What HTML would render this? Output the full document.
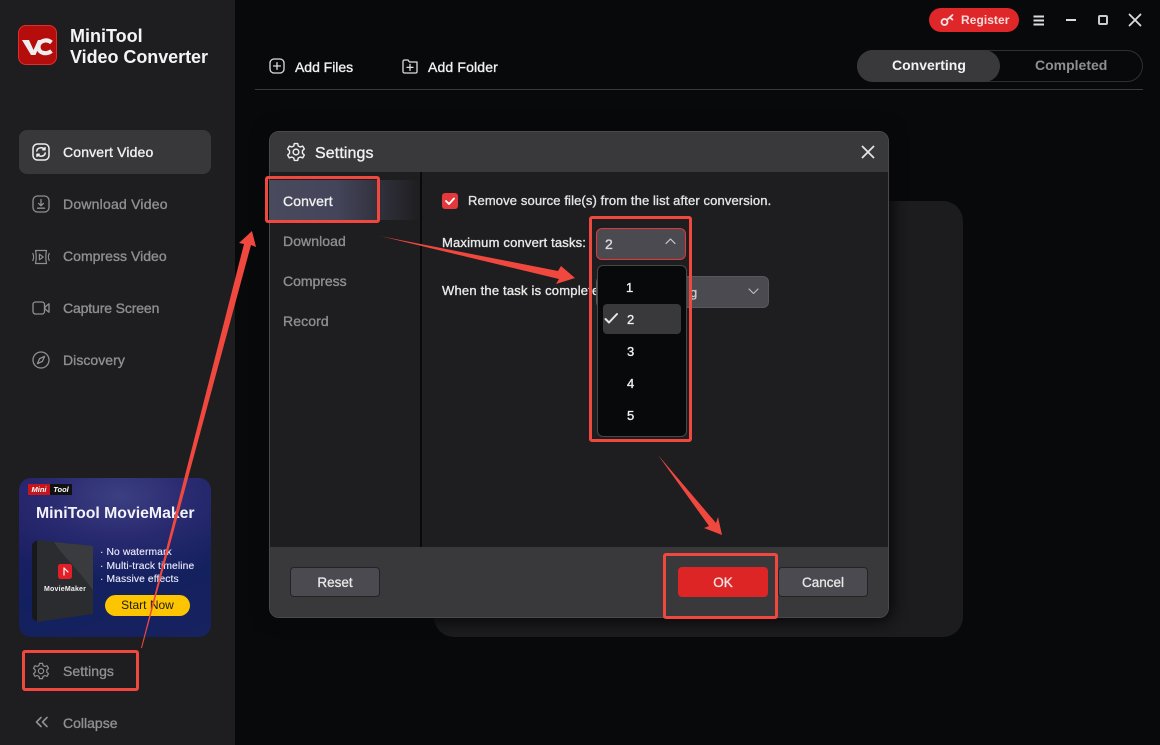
<!DOCTYPE html>
<html lang="en">
<head>
<meta charset="utf-8">
<title>MiniTool Video Converter Settings</title>
<style>
html,body{margin:0;padding:0;background:#08090b}
#a{position:relative;width:1160px;height:745px;overflow:hidden;background:#08090b;font-family:"Liberation Sans",sans-serif;color:#fff}
#a div,#a svg{position:absolute;box-sizing:border-box}
.t{white-space:nowrap;line-height:20px;height:20px;font-size:14px;letter-spacing:.1px;-webkit-text-stroke:.35px currentColor}
.g{color:#8f8f91}
.w{color:#f0f0f0}
.box{border:3px solid #f0483e;border-radius:3px}
.btn{background:#4a4a50;border:1px solid #232326;border-radius:4px;text-align:center;line-height:30px;font-size:13.5px;color:#e8e8e8;-webkit-text-stroke:.3px currentColor}
svg{fill:none;stroke-linecap:round;stroke-linejoin:round}
</style>
</head>
<body>
<div id="a">
  <!-- sidebar -->
  <div style="left:0;top:0;width:235px;height:745px;background:#1e1e20"></div>

  <div style="left:18px;top:25px;width:39px;height:40px;background:#b50c0c;border:1px solid #e22d2d;border-radius:8px"></div>
  <svg style="left:18px;top:25px" width="39" height="40" viewBox="0 0 39 40">
    <path d="M4 15H11L15.5 25L20 15H24L17.5 30H13Z" fill="#eee" stroke="none"/>
    <path d="M33.5 17.5C28 13 20 16.5 20.5 22.5C21 29 29 29.5 33.5 26" stroke="#eee" stroke-width="4.2" stroke-linecap="butt"/>
  </svg>
  <div class="t" style="left:70px;top:26px;font-size:18px;font-weight:bold;color:#f4f4f4;-webkit-text-stroke:0;letter-spacing:0">MiniTool</div>
  <div class="t" style="left:70px;top:47px;font-size:18px;font-weight:bold;color:#f4f4f4;-webkit-text-stroke:0;letter-spacing:-.05px">Video Converter</div>

  <div style="left:19px;top:130px;width:192px;height:44px;background:#38383b;border-radius:8px"></div>
  <svg style="left:32px;top:143px" width="18" height="18" viewBox="0 0 18 18" stroke="#eee" stroke-width="1.5">
    <rect x="1" y="1" width="16" height="16" rx="4.5"/>
    <path d="M4.8 8C5.2 4.4 10.6 3.8 12.6 6.4M13.2 10C12.8 13.6 7.4 14.2 5.4 11.6"/>
    <path d="M13 4.6V6.8H10.8M5 13.4V11.2H7.2"/>
  </svg>
  <div class="t w" style="left:63px;top:142px;letter-spacing:.15px">Convert Video</div>

  <svg style="left:32px;top:195px" width="18" height="18" viewBox="0 0 18 18" stroke="#8f8f91" stroke-width="1.3">
    <rect x="1" y="1" width="16" height="16" rx="4.5"/>
    <path d="M9 4.5V10.5M6.6 8.4L9 10.8L11.4 8.4M5.5 13.2H12.5"/>
  </svg>
  <div class="t g" style="left:63px;top:194px;letter-spacing:.22px">Download Video</div>

  <svg style="left:32px;top:248px" width="18" height="18" viewBox="0 0 18 18" stroke="#8f8f91" stroke-width="1.2">
    <path d="M3.5 2.5H14.5C13.6 6 13.6 12 14.5 15.5H3.5C4.4 12 4.4 6 3.5 2.5Z"/>
    <path d="M7.4 6.2V11.8L11.2 9Z"/>
    <path d="M.8 5.5C1.8 7.5 1.8 10.5 .8 12.5M17.2 5.5C16.2 7.5 16.2 10.5 17.2 12.5"/>
  </svg>
  <div class="t g" style="left:63px;top:246px;letter-spacing:.03px">Compress Video</div>

  <svg style="left:32px;top:300px" width="18" height="16" viewBox="0 0 18 16" stroke="#8f8f91" stroke-width="1.3">
    <rect x="1" y="2" width="11.5" height="12" rx="2.5"/>
    <path d="M13 7L17 3.8V12.2L13 9Z"/>
  </svg>
  <div class="t g" style="left:63px;top:298px;letter-spacing:-.13px">Capture Screen</div>

  <svg style="left:32px;top:351px" width="18" height="18" viewBox="0 0 18 18" stroke="#8f8f91" stroke-width="1.3">
    <circle cx="9" cy="9" r="8"/>
    <path d="M12.6 5.4L10.4 10.4L5.4 12.6L7.6 7.6Z"/>
  </svg>
  <div class="t g" style="left:63px;top:350px;letter-spacing:.05px">Discovery</div>

  <!-- banner -->
  <div style="left:19px;top:478px;width:192px;height:159px;border-radius:12px;overflow:hidden;background:radial-gradient(ellipse 150px 85px at 100px 18px,#3d3f83 0%,#2a2b70 45%,rgba(30,30,90,0) 100%),linear-gradient(160deg,#241c6b 0%,#13205f 55%,#17235f 100%)">
    <div style="left:9px;top:6px;width:22px;height:11px;background:#c4161c;font:italic bold 7.5px/11px 'Liberation Sans',sans-serif;text-align:center;color:#fff">Mini</div>
    <div style="left:31px;top:6px;width:22px;height:11px;background:#111;font:italic bold 7.5px/11px 'Liberation Sans',sans-serif;text-align:center;color:#fff">Tool</div>
    <div class="t" style="left:17px;top:26px;font-size:15.8px;font-weight:bold;color:#f2f2fa;-webkit-text-stroke:0;letter-spacing:0">MiniTool MovieMaker</div>
    <svg style="left:13px;top:62px" width="62" height="83" viewBox="0 0 62 83">
      <path d="M0 4L5 0V82L0 78Z" fill="#17181c"/>
      <path d="M5 0L61 6V74L5 82Z" fill="#2b2c30"/>
      <path d="M61 6V50C45 28 30 15 22 2Z" fill="#3a3b3f"/>
      <rect x="26" y="24" width="14" height="15" rx="2.5" fill="#e21f26"/>
      <path d="M32 28V35M32 28L36 32" stroke="#fff" stroke-width="1.2"/>
    </svg>
    <div class="t" style="left:25px;top:107px;font-size:7px;line-height:10px;height:10px;font-weight:bold;color:#f0f0f0;-webkit-text-stroke:0;letter-spacing:.2px">MovieMaker</div>
    <div class="t" style="left:81px;top:65px;font-size:10.3px;color:#eef;-webkit-text-stroke:.1px #eef">· No watermark</div>
    <div class="t" style="left:81px;top:79px;font-size:10.3px;color:#eef;-webkit-text-stroke:.1px #eef">· Multi-track timeline</div>
    <div class="t" style="left:81px;top:92px;font-size:10.3px;color:#eef;-webkit-text-stroke:.1px #eef">· Massive effects</div>
    <div style="left:86px;top:117px;width:85px;height:21px;background:#fdc500;border-radius:11px;color:#1b1b1b;font-size:12px;line-height:21px;text-align:center">Start Now</div>
  </div>

  <svg style="left:32px;top:662px" width="18" height="18" viewBox="0 0 18 18" stroke="#8f8f91" stroke-width="1.2">
    <circle cx="9" cy="9" r="2.6"/>
    <path d="M7.5 1.4H10.5L11 3.6L12.9 4.5L15 3.7L16.5 6.3L14.8 7.8V10.2L16.5 11.7L15 14.3L12.9 13.5L11 14.4L10.5 16.6H7.5L7 14.4L5.1 13.5L3 14.3L1.5 11.7L3.2 10.2V7.8L1.5 6.3L3 3.7L5.1 4.5L7 3.6Z"/>
  </svg>
  <div class="t g" style="left:63px;top:661px;letter-spacing:.05px">Settings</div>
  <svg style="left:35px;top:716px" width="14" height="12" viewBox="0 0 14 12" stroke="#8f8f91" stroke-width="1.6">
    <path d="M6 1.5L1.5 6L6 10.5M12 1.5L7.5 6L12 10.5"/>
  </svg>
  <div class="t g" style="left:63px;top:713px;letter-spacing:0">Collapse</div>

  <!-- top bar -->
  <div style="left:929px;top:8px;width:90px;height:24px;background:#df2628;border-radius:12px"></div>
  <svg style="left:940px;top:13px" width="15" height="14" viewBox="0 0 15 14" stroke="#f5e6e6" stroke-width="1.8">
    <circle cx="4.5" cy="9" r="3"/>
    <path d="M7 6.8L12.5 2M10 4.6L12.4 6.6"/>
  </svg>
  <div class="t" style="left:961px;top:10px;font-size:12px;font-weight:bold;color:#f6dcdc;-webkit-text-stroke:0;letter-spacing:.05px">Register</div>
  <svg style="left:1032px;top:14px" width="14" height="13" viewBox="0 0 14 13" stroke="#ddd" stroke-width="2">
    <path d="M1.5 2.5H12M1.5 6.5H12M1.5 10.5H12" stroke-linecap="butt"/>
  </svg>
  <div style="left:1066px;top:19px;width:10px;height:2px;background:#ddd"></div>
  <div style="left:1098px;top:15px;width:10px;height:10px;border:2px solid #ccc;border-radius:2px"></div>
  <svg style="left:1128px;top:13px" width="14" height="14" viewBox="0 0 14 14" stroke="#ddd" stroke-width="1.8">
    <path d="M1.5 1.5L12.5 12.5M12.5 1.5L1.5 12.5"/>
  </svg>

  <svg style="left:269px;top:58px" width="16" height="16" viewBox="0 0 16 16" stroke="#ddd" stroke-width="1.3">
    <rect x="1" y="1" width="14" height="14" rx="4"/>
    <path d="M8 4.6V11.4M4.6 8H11.4"/>
  </svg>
  <div class="t w" style="left:295px;top:57px;letter-spacing:-.03px">Add Files</div>
  <svg style="left:402px;top:59px" width="16" height="15" viewBox="0 0 16 15" stroke="#ddd" stroke-width="1.3">
    <path d="M1 2.5C1 1.6 1.6 1 2.5 1H6L7.5 3H15V12.5C15 13.4 14.4 14 13.5 14H2.5C1.6 14 1 13.4 1 12.5Z"/>
    <path d="M8 5.4V11.4M5 8.4H11"/>
  </svg>
  <div class="t w" style="left:428px;top:57px;letter-spacing:.15px">Add Folder</div>

  <div style="left:857px;top:50px;width:286px;height:32px;border:1px solid #303033;border-radius:16px"></div>
  <div style="left:857px;top:50px;width:143px;height:32px;background:#39393c;border-radius:16px"></div>
  <div class="t" style="left:892px;top:55px;font-weight:bold;color:#f2f2f2;-webkit-text-stroke:0;letter-spacing:0">Converting</div>
  <div class="t" style="left:1035px;top:55px;font-weight:bold;color:#8f8f91;-webkit-text-stroke:0;letter-spacing:0">Completed</div>
  <div style="left:255px;top:89px;width:888px;height:1px;background:#3a3a3d"></div>

  <!-- back panel -->
  <div style="left:434px;top:201px;width:529px;height:436px;background:#1c1c1e;border-radius:20px"></div>

  <!-- dialog -->
  <div style="left:269px;top:131px;width:620px;height:487px;background:#1e1e20;border:1px solid #4a4a4d;border-radius:10px;overflow:hidden;box-shadow:0 0 14px 4px #08090b">
    <div style="left:0;top:0;width:618px;height:40px;background:#39393b"></div>
    <div style="left:0;top:415px;width:618px;height:70px;background:#39393b"></div>
    <div style="left:150px;top:40px;width:2px;height:375px;background:#08090b"></div>
    <div style="left:0;top:48px;width:150px;height:40px;background:linear-gradient(90deg,#4a4a5e 0%,#44445a 45%,#1e1e20 100%)"></div>
  </div>
  <svg style="left:286px;top:142px" width="20" height="20" viewBox="0 0 18 18" stroke="#eee" stroke-width="1.3">
    <circle cx="9" cy="9" r="2.6"/>
    <path d="M7.5 1.4H10.5L11 3.6L12.9 4.5L15 3.7L16.5 6.3L14.8 7.8V10.2L16.5 11.7L15 14.3L12.9 13.5L11 14.4L10.5 16.6H7.5L7 14.4L5.1 13.5L3 14.3L1.5 11.7L3.2 10.2V7.8L1.5 6.3L3 3.7L5.1 4.5L7 3.6Z"/>
  </svg>
  <div class="t w" style="left:315px;top:144px;font-size:16px;letter-spacing:.1px">Settings</div>
  <svg style="left:861px;top:145px" width="14" height="14" viewBox="0 0 14 14" stroke="#e4e4e4" stroke-width="1.8">
    <path d="M1.5 1.5L12.5 12.5M12.5 1.5L1.5 12.5"/>
  </svg>

  <div class="t w" style="left:283px;top:191px">Convert</div>
  <div class="t g" style="left:283px;top:231px;letter-spacing:.08px">Download</div>
  <div class="t g" style="left:283px;top:271px;letter-spacing:-.03px">Compress</div>
  <div class="t g" style="left:283px;top:311px">Record</div>

  <div style="left:442px;top:193px;width:16px;height:16px;background:#e3383c;border-radius:3px"></div>
  <svg style="left:442px;top:193px" width="16" height="16" viewBox="0 0 16 16" stroke="#fff" stroke-width="1.9">
    <path d="M4 8L7 11L12 5.5"/>
  </svg>
  <div class="t" style="left:468px;top:191px;font-size:13px;color:#e4e4e4;letter-spacing:.12px">Remove source file(s) from the list after conversion.</div>
  <div class="t" style="left:442px;top:233px;font-size:13px;color:#e8e8e8;letter-spacing:.18px">Maximum convert tasks:</div>
  <div class="t" style="left:442px;top:281px;font-size:13px;color:#e8e8e8;letter-spacing:.2px">When the task is complete</div>

  <div style="left:596px;top:276px;width:173px;height:32px;background:#4a4a50;border:1px solid #58585c;border-radius:6px"></div>
  <svg style="left:747px;top:287px" width="13" height="9" viewBox="0 0 13 9" stroke="#bbb" stroke-width="1.2">
    <path d="M2 2L6.5 6.5L11 2"/>
  </svg>
  <div class="t" style="left:690px;top:283px;font-size:13px;color:#ccc">g</div>

  <div style="left:596px;top:228px;width:90px;height:32px;background:#4a4a50;border:1px solid #e0383b;border-radius:6px"></div>
  <div class="t" style="left:605px;top:234px;color:#ddd">2</div>
  <svg style="left:664px;top:237px" width="13" height="9" viewBox="0 0 13 9" stroke="#ccc" stroke-width="1.2">
    <path d="M2 6.5L6.5 2L11 6.5"/>
  </svg>

  <div style="left:597px;top:265px;width:90px;height:172px;background:#08090b;border:1px solid #47474a;border-radius:6px"></div>
  <div style="left:603px;top:304px;width:78px;height:30px;background:#39393b;border-radius:4px"></div>
  <svg style="left:604px;top:312px" width="15" height="13" viewBox="0 0 15 13" stroke="#e8e8e8" stroke-width="2">
    <path d="M1.5 7L5 10.5L13 2"/>
  </svg>
  <div class="t w" style="left:626px;top:278px;font-size:13px">1</div>
  <div class="t w" style="left:627px;top:310px;font-size:13px">2</div>
  <div class="t w" style="left:627px;top:342px;font-size:13px">3</div>
  <div class="t w" style="left:627px;top:374px;font-size:13px">4</div>
  <div class="t w" style="left:627px;top:406px;font-size:13px">5</div>

  <div class="btn" style="left:290px;top:567px;width:90px;height:30px">Reset</div>
  <div class="btn" style="left:678px;top:567px;width:90px;height:30px;background:#dd2526;border-color:#dd2526;color:#f4e4e4">OK</div>
  <div class="btn" style="left:778px;top:567px;width:90px;height:30px">Cancel</div>

  <!-- annotations -->
  <div class="box" style="left:265px;top:176px;width:115px;height:47px"></div>
  <div class="box" style="left:589px;top:216px;width:103px;height:226px"></div>
  <div class="box" style="left:663px;top:553px;width:115px;height:66px"></div>
  <div class="box" style="left:22px;top:650px;width:117px;height:41px"></div>
  <svg style="left:0;top:0" width="1160" height="745" viewBox="0 0 1160 745" stroke="none">
    <path d="M141 648L244 244L239 243L252 231L256 247L251 245L142 648Z" style="fill:#f0483e"/>
    <path d="M380 236L558 271L561 266L575 278L556 284L559 279Z" style="fill:#f0483e"/>
    <path d="M658 455L716 523L718 517L722 535L704 528L709 526Z" style="fill:#f0483e"/>
  </svg>
</div>
</body>
</html>
